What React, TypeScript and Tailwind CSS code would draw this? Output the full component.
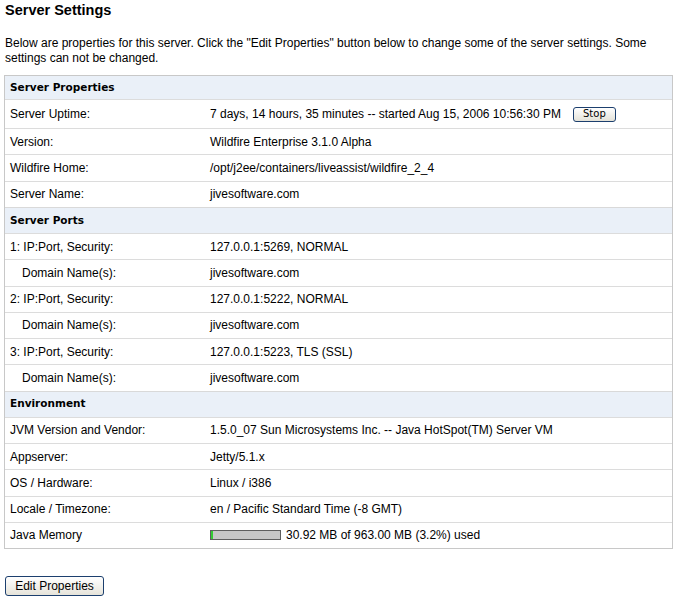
import React from "react";

type Row =
  | { kind: "header"; label: string }
  | { kind: "data"; label: string; value: React.ReactNode; indent?: boolean; tall?: boolean };

const rows: Row[] = [
  { kind: "header", label: "Server Properties" },
  {
    kind: "data",
    label: "Server Uptime:",
    tall: true,
    value: (
      <span className="flex items-center">
        <span>7 days, 14 hours, 35 minutes -- started Aug 15, 2006 10:56:30 PM</span>
        <button className="ml-[12px] h-[15px] w-[43px] rounded-[3px] border border-[#1c3f6e] bg-gradient-to-b from-[#ffffff] to-[#e4e2d8] leading-[12px] text-black [font-family:'DejaVu_Sans',sans-serif] text-[10px]">
          Stop
        </button>
      </span>
    ),
  },
  { kind: "data", label: "Version:", value: "Wildfire Enterprise 3.1.0 Alpha" },
  { kind: "data", label: "Wildfire Home:", value: "/opt/j2ee/containers/liveassist/wildfire_2_4" },
  { kind: "data", label: "Server Name:", value: "jivesoftware.com" },
  { kind: "header", label: "Server Ports" },
  { kind: "data", label: "1: IP:Port, Security:", value: "127.0.0.1:5269, NORMAL" },
  { kind: "data", label: "Domain Name(s):", value: "jivesoftware.com", indent: true },
  { kind: "data", label: "2: IP:Port, Security:", value: "127.0.0.1:5222, NORMAL" },
  { kind: "data", label: "Domain Name(s):", value: "jivesoftware.com", indent: true },
  { kind: "data", label: "3: IP:Port, Security:", value: "127.0.0.1:5223, TLS (SSL)" },
  { kind: "data", label: "Domain Name(s):", value: "jivesoftware.com", indent: true },
  { kind: "header", label: "Environment" },
  { kind: "data", label: "JVM Version and Vendor:", value: "1.5.0_07 Sun Microsystems Inc. -- Java HotSpot(TM) Server VM" },
  { kind: "data", label: "Appserver:", value: "Jetty/5.1.x" },
  { kind: "data", label: "OS / Hardware:", value: "Linux / i386" },
  { kind: "data", label: "Locale / Timezone:", value: "en / Pacific Standard Time (-8 GMT)" },
  {
    kind: "data",
    label: "Java Memory",
    value: (
      <span className="flex items-center">
        <span className="flex h-[10px] w-[71px] border border-[#5e5e5e] bg-[#c6c6c6]">
          <span className="h-full w-[2px] bg-[#33cc33]" />
        </span>
        <span className="ml-[5px]">30.92 MB of 963.00 MB (3.2%) used</span>
      </span>
    ),
  },
];

export default function App() {
  return (
    <div className="min-h-[599px] w-[680px] bg-white text-[12px] text-black [font-family:'Liberation_Sans',Arial,sans-serif]">
      <div className="px-[5px] pt-[1px]">
        <h1 className="text-[14.5px] font-bold leading-[18px]">Server Settings</h1>
        <p className="mt-[17px] w-[660px] text-[12px] leading-[15px]">
          Below are properties for this server. Click the "Edit Properties" button below to change some of the server
          settings. Some settings can not be changed.
        </p>
      </div>
      <div className="ml-[4px] mt-[9px] w-[669px] border border-[#c8c8c8]">
        {rows.map((r, i) =>
          r.kind === "header" ? (
            <div
              key={i}
              className={
                "flex items-center bg-[#eaf0f8] pl-[5px] text-[10.5px] font-bold [font-family:'DejaVu_Sans',Verdana,sans-serif] " +
                (i === 0 ? "h-[23px]" : "h-[26.25px] border-t border-[#d9d9d9]")
              }
            >
              {r.label}
            </div>
          ) : (
            <div
              key={i}
              className={
                "flex items-center border-t border-[#dcdcdc] " + (r.tall ? "h-[29px]" : "h-[26.25px]")
              }
            >
              <div className={"w-[200px] shrink-0 " + (r.indent ? "pl-[17px]" : "pl-[5px]")}>{r.label}</div>
              <div className="pl-[5px]">{r.value}</div>
            </div>
          )
        )}
      </div>
      <div className="ml-[5px] mt-[27px]">
        <button className="h-[20px] w-[99px] rounded-[3px] border border-[#1c3f6e] bg-gradient-to-b from-[#ffffff] to-[#e6e4da] text-[12px] leading-[14px] text-black">
          Edit Properties
        </button>
      </div>
    </div>
  );
}
